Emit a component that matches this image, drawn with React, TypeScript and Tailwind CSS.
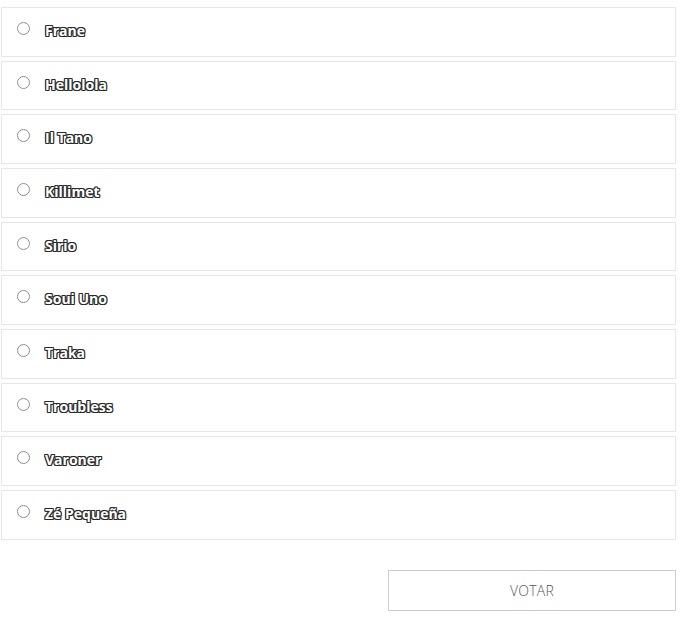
const options = [
  'Frane',
  'Hellolola',
  'Il Tano',
  'Killimet',
  'Sirio',
  'Soui Uno',
  'Traka',
  'Troubless',
  'Varoner',
  'Zé Pequeña',
];

export default function App() {
  return (
    <div className="min-h-screen bg-white pl-[1px] pt-[7px] font-['Open_Sans',sans-serif]">
      <form className="w-[675px]">
        <div className="flex flex-col gap-[4px]">
          {options.map((name) => (
            <label
              key={name}
              className="flex h-[49.67px] cursor-pointer items-start border border-[#e6e6e6] bg-white pl-[15px] pt-[14px]"
            >
              <span className="h-[13px] w-[13px] shrink-0 rounded-full border border-[#8f8f8f] bg-white" />
              <span className="ml-[15px] -mt-[1px] text-[14px] font-bold leading-[20px] text-white [text-shadow:1px_1px_0_#2a2a2a,-1px_-1px_0_#2a2a2a,1px_-1px_0_#2a2a2a,-1px_1px_0_#2a2a2a,0_1px_0_#2a2a2a,1px_0_0_#2a2a2a,0_-1px_0_#2a2a2a,-1px_0_0_#2a2a2a]">
                {name}
              </span>
            </label>
          ))}
        </div>
        <div className="mt-[30px] flex justify-end">
          <button
            type="button"
            className="h-[41px] w-[288px] border border-[#cccccc] bg-white text-[14px] font-light tracking-[0.2px] text-[#555555]"
          >
            VOTAR
          </button>
        </div>
      </form>
    </div>
  );
}
